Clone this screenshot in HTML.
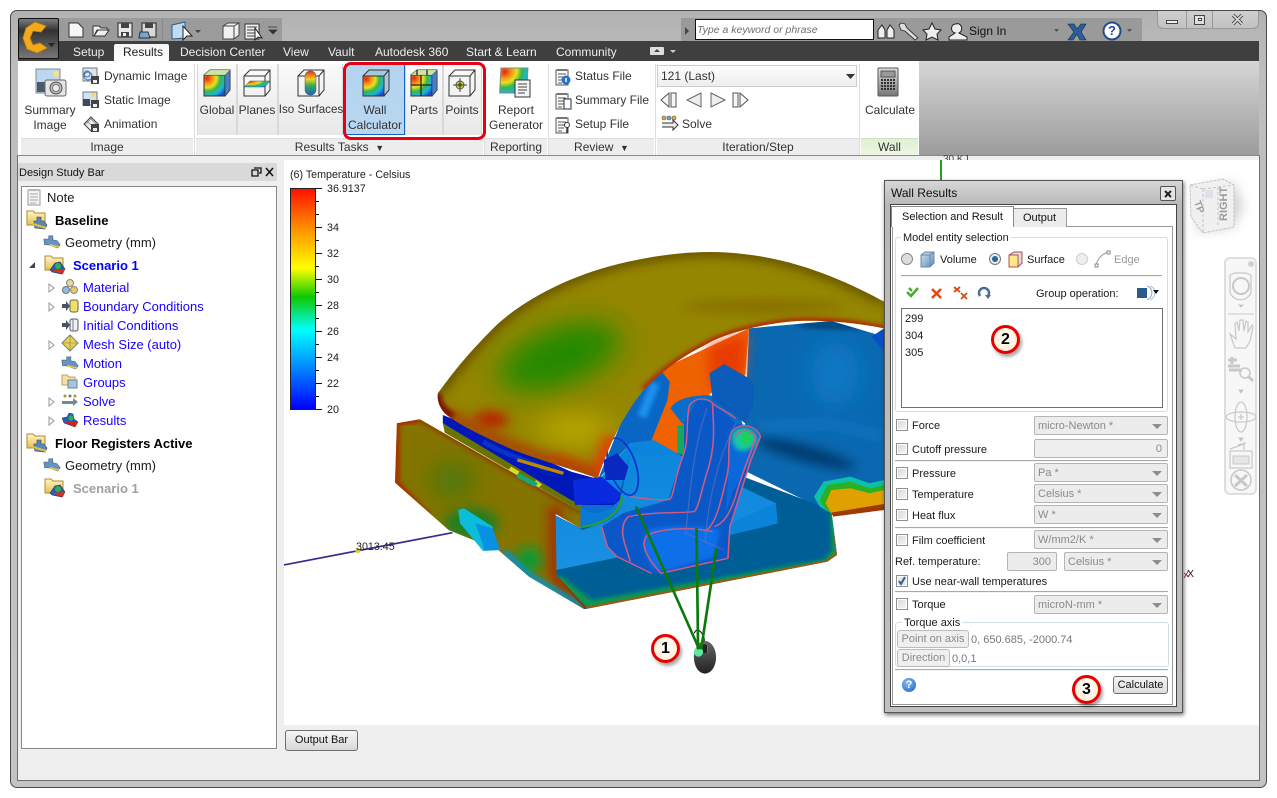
<!DOCTYPE html>
<html><head><meta charset="utf-8"><title>Wall Results</title>
<style>
html,body{margin:0;padding:0;background:#fff}
body{position:relative;width:1277px;height:798px;overflow:hidden;font:12px/14px "Liberation Sans",sans-serif;color:#1a1a1a}
.b{position:absolute;box-sizing:border-box}
.t{position:absolute;white-space:nowrap;line-height:14px;font-size:12px}
.d{font-size:11px;margin-top:1px}
.c{text-align:center;transform:translateX(-50%)}
.bl{color:#1a00ff;font-size:13px;margin-top:1px}
.bd{font-weight:bold;font-size:13px;color:#000;margin-top:1px}
.i{position:absolute;overflow:visible}
.sel{position:absolute;box-sizing:border-box;height:19px;background:#ececec;border:1px solid #b4b4b4;border-radius:2px;color:#8a8a8a;padding:2px 0 0 3px;font-size:11px;white-space:nowrap}
.arr:after{content:"";position:absolute;right:5px;top:7px;border:5px solid transparent;border-top:5px solid #8d8d8d;border-bottom:0}
.cb{position:absolute;left:896px;width:12px;height:12px;box-sizing:border-box;border:1px solid #8e8f8f;background:linear-gradient(135deg,#d8d8d8,#f6f6f6);box-shadow:inset 0 0 0 1px #fff}
.hr{position:absolute;left:895px;width:273px;height:1px;background:#a8a8a8;box-shadow:0 1px 0 #f4f4f4}
.btn{position:absolute;box-sizing:border-box;background:linear-gradient(#f4f4f4,#dedede);border:1px solid #707070;border-radius:3px;text-align:center;font-size:11px;line-height:16px}
.dis{border-color:#bbb;color:#8a8a8a;background:#efefef}
.grp{position:absolute;top:138px;height:17px;background:#ededed;text-align:center;color:#333;font-size:12px;line-height:16px;border-top:1px solid #ddd;box-sizing:border-box}
.tile{position:absolute;top:64px;height:71px;box-sizing:border-box;background:linear-gradient(#fafafa,#e8e8e8);border:1px solid #d8d8d8;border-width:0 1px}
.num{position:absolute;box-sizing:border-box;width:29px;height:29px;border:3px solid #e80000;border-radius:50%;background:radial-gradient(circle at 50% 40%,#fff,#ffeccb);font:bold 16px/23px "Liberation Sans",sans-serif;color:#000;text-align:center;box-shadow:2px 3px 3px rgba(0,0,0,.35)}
.lg{left:327px;font-size:10.7px;margin-top:1px}
</style></head><body>

<svg width="0" height="0" style="position:absolute">
<defs>
<radialGradient id="ct" cx="15%" cy="15%" r="105%"><stop offset="0" stop-color="#e8201c"/><stop offset=".25" stop-color="#f59a10"/><stop offset=".42" stop-color="#e8e020"/><stop offset=".6" stop-color="#35b84a"/><stop offset=".8" stop-color="#20b4d8"/><stop offset="1" stop-color="#1a50c8"/></radialGradient>
<linearGradient id="gy" x1="0" y1="0" x2="0" y2="1"><stop offset="0" stop-color="#e0e0e0"/><stop offset="1" stop-color="#777"/></linearGradient>
<linearGradient id="bm" x1="0" y1="0" x2="1" y2="1"><stop offset="0" stop-color="#d5e4f2"/><stop offset="1" stop-color="#5c8ab8"/></linearGradient>
<linearGradient id="ye" x1="0" y1="0" x2="0" y2="1"><stop offset="0" stop-color="#fff6c8"/><stop offset="1" stop-color="#e8c050"/></linearGradient>
<linearGradient id="rbr" x1="0" y1="0" x2="0" y2="1"><stop offset="0" stop-color="#e83010"/><stop offset=".35" stop-color="#f0d020"/><stop offset=".6" stop-color="#30b050"/><stop offset="1" stop-color="#2060c8"/></linearGradient>
<symbol id="cube" viewBox="0 0 28 28"><rect x="1" y="6" width="21" height="21" fill="url(#ct)" stroke="#333"/><path d="M1 6 7 1H27V21L22 27M22 6 27 1" fill="none" stroke="#333"/><path d="M22 6 27 1V21L22 27Z" fill="#2060b0" opacity=".8"/><path d="M1 6 7 1H27L22 6Z" fill="#c8e0a0" opacity=".9"/></symbol>
<symbol id="fold" viewBox="0 0 22 22"><path d="M1 3H7L9 5H19V17H1Z" fill="url(#ye)" stroke="#b08a30"/><path d="M8 17V13H11V9H15V13H18L21 17 19 21 9 20Z" fill="#5a86b8" stroke="#345" stroke-width=".6"/><path d="M7 16 20 20" stroke="#e4c040" stroke-width="2"/></symbol>
<symbol id="folc" viewBox="0 0 22 22"><path d="M1 3H7L9 5H19V17H1Z" fill="url(#ye)" stroke="#b08a30"/><path d="M6 17 11 10 16 9 21 16 18 21 8 19Z" fill="#1a60c0" stroke="#333" stroke-width=".6"/><circle cx="14" cy="13" r="3" fill="#30b050"/><path d="M7 17 19 21 21 16" fill="#d83010"/></symbol>
<symbol id="geo" viewBox="0 0 22 18"><path d="M1 6H7V2H12V7L17 8 21 13 18 17 7 13H2Z" fill="#6a92c0" stroke="#4a6a90" stroke-width=".8"/><path d="M8 13 20 16" stroke="#e8c850" stroke-width="2"/></symbol>
<symbol id="tri" viewBox="0 0 7 10"><path d="M1 1 6 5 1 9Z" fill="#fff" stroke="#999"/></symbol>
<symbol id="note" viewBox="0 0 14 18"><rect x="1" y="2" width="12" height="15" fill="#f2f2f2" stroke="#999"/><path d="M3 6H11M3 9H11M3 12H11M3 15H9" stroke="#aaa"/><path d="M1 1H13V3H1Z" fill="#bbb"/></symbol>
<symbol id="doc" viewBox="0 0 16 18"><rect x="1" y="2" width="12" height="15" fill="#fafafa" stroke="#555"/><path d="M3 1V3M5 1V3M7 1V3M9 1V3M11 1V3" stroke="#444"/><path d="M3 6H11M3 9H11M3 12H9M3 15H7" stroke="#555"/></symbol>
</defs></svg>

<!-- window frame -->
<div class="b" style="left:10px;top:10px;width:1257px;height:778px;border:1px solid #4a4a4a;border-radius:7px;background:linear-gradient(#b2b2b2,#bdbdbd 60px,#c4c4c4)"></div>
<div class="b" style="left:17px;top:155px;width:1243px;height:626px;background:#efefef;border:1px solid #6e6e6e;border-top:1px solid #999"></div>
<div class="b" style="left:1157px;top:11px;width:102px;height:18px;background:linear-gradient(#cfcfcf,#c2c2c2);border:1px solid #999;border-top:0;border-radius:0 0 6px 6px"></div>
<div class="b" style="left:1186px;top:11px;width:1px;height:17px;background:#999"></div>
<div class="b" style="left:1212px;top:11px;width:1px;height:17px;background:#999"></div>
<div class="b" style="left:1166px;top:20px;width:12px;height:4px;background:#eee;border:1px solid #444"></div>
<div class="b" style="left:1194px;top:15px;width:11px;height:10px;background:#ddd;border:1px solid #444"></div>
<div class="b" style="left:1198px;top:18px;width:4px;height:3px;border:1px solid #444;background:#fff"></div>
<svg class="i" style="left:1231px;top:14px" width="13" height="11"><path d="M2 1 11 10M11 1 2 10" stroke="#444" stroke-width="3.4"/><path d="M2 1 11 10M11 1 2 10" stroke="#ddd" stroke-width="1.6"/></svg>

<!-- Tab bar -->
<div class="b" style="left:18px;top:41px;width:1241px;height:20px;background:#3f3f3f"></div>
<div class="b" style="left:114px;top:44px;width:55px;height:18px;background:linear-gradient(#f4f4f4,#fff);border-radius:2px 2px 0 0"></div>
<div class="t" style="left:73px;top:45px;color:#eee">Setup</div>
<div class="t" style="left:123px;top:45px;color:#222">Results</div>
<div class="t" style="left:180px;top:45px;color:#eee">Decision Center</div>
<div class="t" style="left:283px;top:45px;color:#eee">View</div>
<div class="t" style="left:328px;top:45px;color:#eee">Vault</div>
<div class="t" style="left:375px;top:45px;color:#eee">Autodesk 360</div>
<div class="t" style="left:466px;top:45px;color:#eee">Start &amp; Learn</div>
<div class="t" style="left:556px;top:45px;color:#eee">Community</div>
<svg class="i" style="left:650px;top:46px" width="28" height="10"><rect x="0" y="1" width="14" height="8" rx="1" fill="#ddd"/><path d="M4 6 7 3 10 6Z" fill="#444"/><path d="M20 4H26L23 7Z" fill="#ccc"/></svg>

<!-- QAT -->
<div class="b" style="left:58px;top:18px;width:224px;height:23px;background:#9b9b9b"></div>
<div class="b" style="left:162px;top:18px;width:1px;height:23px;background:#8a8a8a"></div>
<svg class="i" style="left:58px;top:18px" width="224" height="23">
<path d="M11 5H20L25 10V19H11Z" fill="#f6f6f6" stroke="#333"/>
<path d="M35 8H41L43 10H49V12H39L36 18H35ZM36 18 40 12H51L47 18Z" fill="#f0f0f0" stroke="#333"/>
<path d="M60 5H74V19H60Z" fill="#e8e8e8" stroke="#222"/><path d="M63 5H71V10H63ZM63 14H71V19H63Z" fill="#444"/><rect x="65" y="15" width="3" height="3" fill="#eee"/>
<path d="M84 5H98V19H84Z" fill="#d8d8d8" stroke="#222"/><path d="M87 5H95V10H87Z" fill="#444"/><path d="M82 14H90L92 20H81Z" fill="#7aa6cc" stroke="#234"/>
<path d="M114 7 127 4V20L114 21Z" fill="#bfdcf0" stroke="#2a5a8a"/><path d="M125 8 125 22 129 18 134 18Z" fill="#fff" stroke="#222"/>
<path d="M137 12H143L140 15Z" fill="#444"/>
<path d="M165 8 170 5H181V17L176 21H165Z" fill="#f0f0f0" stroke="#444"/><path d="M165 8H176V21M176 8 181 5" fill="none" stroke="#444"/>
<path d="M171 12H177L174 15Z" fill="#444" transform="translate(-3,0)" opacity="0"/>
</svg>
<svg class="i" style="left:244px;top:22px" width="22" height="18"><rect x="1" y="2" width="14" height="15" fill="#f0f0f0" stroke="#333"/><path d="M3 5H13M3 8H13M3 11H13M3 14H13" stroke="#444"/><path d="M11 6V18L14 15 18 16Z" fill="#fff" stroke="#222"/></svg>
<svg class="i" style="left:267px;top:26px" width="12" height="10"><path d="M1 1H10M2 4H10L6 8Z" fill="#333" stroke="#333" stroke-width=".7"/></svg>
<!-- App button -->
<div class="b" style="left:18px;top:18px;width:41px;height:41px;border:1px solid #111;background:linear-gradient(#7a7a7a,#333 30%,#777 100%);border-radius:2px"></div>
<svg class="i" style="left:18px;top:18px" width="41" height="41"><path d="M28 8 17 4 8 10 5 20 9 31 19 35 29 30 22 25 15 27 12 20 15 13 23 14Z" fill="#f2a91c" stroke="#c48210" stroke-width=".8"/><path d="M30 25 37 25 33.500 29Z" fill="#222"/></svg>

<!-- Search bar -->
<div class="b" style="left:681px;top:18px;width:461px;height:23px;background:#9a9a9a"></div>
<div class="b" style="left:695px;top:19px;width:179px;height:21px;background:#fff;border:1px solid #111"></div>
<div class="t" style="left:697px;top:23px;font-style:italic;color:#6e6e6e;font-size:10.5px">Type a keyword or phrase</div>
<svg class="i" style="left:683px;top:22px" width="460" height="18">
<path d="M2 5 6 9 2 13Z" fill="#444"/>
<path d="M195 8 199 3 202 8V16H195ZM204 8 207 3 211 8V16H204Z" fill="#eee" stroke="#222"/>
<path d="M218 1 222 2 224 6 235 16 232 18 222 9 218 8 216 3Z" fill="#ddd" stroke="#333" stroke-width=".9"/>
<path d="M249 1 252 7 258 8 254 12 255 18 249 15 243 18 244 12 240 8 246 7Z" fill="#eee" stroke="#222"/>
<path d="M273 2A3.500 4 0 0 1 276 11L284 15V18H266V15L272 11A3.500 4 0 0 1 273 2Z" fill="#eee" stroke="#222"/>
<path d="M371 7H376L373.500 10Z" fill="#555"/>
<path d="M385 2H391L394 7 398 2H403L398 10 403 18H397L394 12 390 18H385L391 10Z" fill="#2b5ea0" stroke="#123" stroke-width=".6"/>
<circle cx="429" cy="9" r="8.500" fill="#fff" stroke="#224a90" stroke-width="2"/>
<path d="M444 7H449L446.500 10Z" fill="#555"/>
</svg>
<div class="t" style="left:1108px;top:24px;font-weight:bold;color:#1d4aa0;font-size:13px">?</div>
<div class="t" style="left:969px;top:24px;color:#111">Sign In</div>

<!-- Ribbon -->
<div class="b" style="left:18px;top:61px;width:901px;height:94px;background:#fff"></div>
<div class="b" style="left:919px;top:61px;width:340px;height:94px;background:linear-gradient(#d6d6d6,#9c9c9c)"></div>
<div class="b" style="left:18px;top:155px;width:1241px;height:1px;background:#8a8a8a"></div>
<div class="grp" style="left:21px;width:172px">Image</div>
<div class="grp" style="left:196px;width:287px">Results Tasks &nbsp;<span style="font-size:9px">▼</span></div>
<div class="grp" style="left:485px;width:62px">Reporting</div>
<div class="grp" style="left:549px;width:105px">Review &nbsp;<span style="font-size:9px">▼</span></div>
<div class="grp" style="left:657px;width:202px">Iteration/Step</div>
<div class="grp" style="left:861px;width:57px;background:linear-gradient(#dff0d0,#eef6e4);border-color:#cde0bd">Wall</div>
<div class="b" style="left:194px;top:64px;width:1px;height:91px;background:#ddd"></div>
<div class="b" style="left:484px;top:64px;width:1px;height:91px;background:#ddd"></div>
<div class="b" style="left:548px;top:64px;width:1px;height:91px;background:#ddd"></div>
<div class="b" style="left:655px;top:64px;width:1px;height:91px;background:#ddd"></div>
<div class="b" style="left:859px;top:64px;width:1px;height:91px;background:#ddd"></div>

<!-- Image group -->
<svg class="i" style="left:36px;top:68px" width="30" height="32"><rect x="0" y="1" width="24" height="24" fill="#bcd8f0" stroke="#888"/><rect x="1" y="14" width="10" height="10" fill="#4a5a6a"/><circle cx="20" cy="6" r="3" fill="#ffe080"/><rect x="9" y="12" width="21" height="16" rx="2" fill="#e4e4e4" stroke="#666"/><circle cx="20" cy="20" r="6" fill="#bbb" stroke="#555"/><circle cx="20" cy="20" r="3.500" fill="#eee" stroke="#777"/></svg>
<div class="t c" style="left:50px;top:103px;color:#333">Summary</div>
<div class="t c" style="left:50px;top:118px;color:#333">Image</div>
<svg class="i" style="left:83px;top:68px" width="16" height="16"><rect x="0" y="0" width="14" height="13" fill="#d9e6f2" stroke="#777"/><circle cx="4" cy="6" r="3" fill="none" stroke="#4070b0"/><circle cx="5" cy="8" r="4" fill="none" stroke="#4070b0"/><rect x="8" y="8" width="8" height="8" fill="#444"/><rect x="10" y="12" width="4" height="3" fill="#eee"/></svg>
<svg class="i" style="left:83px;top:92px" width="16" height="16"><rect x="0" y="0" width="14" height="13" fill="#cfe3f5" stroke="#777"/><rect x="0" y="7" width="7" height="7" fill="#3a4a5a"/><circle cx="10" cy="3" r="2" fill="#ffd860"/><rect x="8" y="8" width="8" height="8" fill="#444"/><rect x="10" y="12" width="4" height="3" fill="#eee"/></svg>
<svg class="i" style="left:83px;top:116px" width="16" height="16"><path d="M1 8 8 1 15 8 8 15Z" fill="#eee" stroke="#444"/><path d="M4 5 11 12M7 2 14 9M2 9 9 2" stroke="#777" stroke-width=".7"/><rect x="8" y="8" width="8" height="8" fill="#444"/><rect x="10" y="12" width="4" height="3" fill="#eee"/></svg>
<div class="t" style="left:104px;top:69px;color:#333">Dynamic Image</div>
<div class="t" style="left:104px;top:93px;color:#333">Static Image</div>
<div class="t" style="left:104px;top:117px;color:#333">Animation</div>

<!-- Tiles -->
<div class="tile" style="left:197px;width:40px"></div>
<div class="tile" style="left:237px;width:41px"></div>
<div class="tile" style="left:278px;width:65px"></div>
<div class="tile" style="left:345px;width:60px;background:linear-gradient(#b4d4ef,#b8d6f0);border:1px solid #1560c4"></div>
<div class="tile" style="left:405px;width:38px"></div>
<div class="tile" style="left:443px;width:39px"></div>
<svg class="i" style="left:203px;top:69px" width="28" height="28"><use href="#cube" width="28" height="28"/></svg>
<svg class="i" style="left:243px;top:69px" width="28" height="28"><path d="M1 7H22V27H1ZM1 7 7 1H27V21L22 27M22 7 27 1" fill="none" stroke="#333"/><path d="M1 18 7 12H27L22 18Z" fill="url(#ct)" stroke="#555" stroke-width=".5"/></svg>
<svg class="i" style="left:297px;top:69px" width="28" height="28"><path d="M1 7H22V27H1ZM1 7 7 1H27V21L22 27M22 7 27 1" fill="none" stroke="#333"/><rect x="8" y="2" width="11" height="24" rx="5" fill="url(#rbr)" stroke="#555" stroke-width=".5"/></svg>
<svg class="i" style="left:362px;top:69px" width="28" height="28"><path d="M1 7 7 1H27V21L22 27" fill="#a8c8e0" stroke="#333"/><path d="M22 7 27 1M1 7H22" stroke="#333"/><rect x="1" y="7" width="21" height="20" fill="url(#ct)" stroke="#333"/></svg>
<svg class="i" style="left:410px;top:69px" width="28" height="28"><use href="#cube" width="28" height="28"/><path d="M1 16H22M11 6V27M7 1V6M17 1V6" stroke="#222" stroke-width="1.3"/></svg>
<svg class="i" style="left:448px;top:69px" width="28" height="28"><path d="M1 7H22V27H1ZM1 7 7 1H27V21L22 27M22 7 27 1" fill="none" stroke="#333"/><circle cx="12" cy="16" r="4" fill="#e8d020" stroke="#555"/><circle cx="12" cy="16" r="2" fill="#209060"/><path d="M12 9V23M5 16H19" stroke="#444"/></svg>
<div class="t c" style="left:217px;top:103px;color:#333">Global</div>
<div class="t c" style="left:257px;top:103px;color:#333">Planes</div>
<div class="t c" style="left:311px;top:103px;color:#333;font-size:11.6px">Iso Surfaces</div>
<div class="t c" style="left:375px;top:103px;color:#333">Wall</div>
<div class="t c" style="left:375px;top:118px;color:#333">Calculator</div>
<div class="t c" style="left:424px;top:103px;color:#333">Parts</div>
<div class="t c" style="left:462px;top:103px;color:#333">Points</div>
<div class="b" style="left:343px;top:62px;width:143px;height:78px;border:3px solid #e60012;border-radius:8px"></div>

<!-- Reporting -->
<svg class="i" style="left:500px;top:67px" width="32" height="32"><rect x="1" y="1" width="27" height="25" fill="url(#ct)" stroke="#888" transform="skewX(-3)"/><rect x="15" y="13" width="15" height="17" fill="#f4f4f4" stroke="#333"/><path d="M18 17H27M18 20H27M18 23H27M18 26H25" stroke="#444"/></svg>
<div class="t c" style="left:516px;top:103px;color:#333">Report</div>
<div class="t c" style="left:516px;top:118px;color:#333">Generator</div>

<!-- Review -->
<svg class="i" style="left:555px;top:68px" width="16" height="18"><use href="#doc" width="16" height="18"/><circle cx="11" cy="12" r="4.500" fill="#2870c8"/><path d="M11 10V14" stroke="#fff" stroke-width="1.500"/></svg>
<svg class="i" style="left:555px;top:92px" width="16" height="18"><use href="#doc" width="16" height="18"/><rect x="9" y="7" width="7" height="10" fill="#fff" stroke="#234"/></svg>
<svg class="i" style="left:555px;top:116px" width="16" height="18"><use href="#doc" width="16" height="18"/><circle cx="12" cy="9" r="2.500" fill="#fff" stroke="#333"/><path d="M12 11V17" stroke="#333" stroke-width="1.500"/></svg>
<div class="t" style="left:575px;top:69px;color:#333">Status File</div>
<div class="t" style="left:575px;top:93px;color:#333">Summary File</div>
<div class="t" style="left:575px;top:117px;color:#333">Setup File</div>

<!-- Iteration -->
<div class="b" style="left:657px;top:65px;width:200px;height:22px;background:linear-gradient(#fdfdfd,#eee);border:1px solid #ccc;padding:3px 0 0 3px;color:#333">121 (Last)</div>
<svg class="i" style="left:660px;top:90px" width="90" height="20">
<path d="M9 3 1 10 9 17ZM11 3H16V17H11Z" fill="#f6f6f6" stroke="#555"/>
<path d="M41 3 27 10 41 17Z" fill="#eee" stroke="#666"/>
<path d="M51 3 65 10 51 17Z" fill="#eee" stroke="#666"/>
<path d="M73 3H78V17H73ZM80 3 88 10 80 17Z" fill="#f6f6f6" stroke="#555"/>
</svg>
<svg class="i" style="left:846px;top:74px" width="10" height="6"><path d="M0 0H9L4.500 5Z" fill="#333"/></svg>
<svg class="i" style="left:661px;top:115px" width="18" height="17"><circle cx="3" cy="3" r="2" fill="#e8b040" stroke="#444" stroke-width=".6"/><circle cx="8" cy="3" r="2" fill="#70a8e0" stroke="#444" stroke-width=".6"/><circle cx="13" cy="3" r="2" fill="#e8b040" stroke="#444" stroke-width=".6"/><path d="M1 8H12V5L17 10 12 15V12H1" fill="#eee" stroke="#333"/></svg>
<div class="t" style="left:682px;top:117px;color:#333">Solve</div>

<!-- Calculate -->
<svg class="i" style="left:877px;top:67px" width="22" height="30"><rect x="1" y="1" width="20" height="28" rx="1" fill="url(#gy)" stroke="#555"/><rect x="4" y="4" width="14" height="6" fill="#999" stroke="#555"/><path d="M4 13H18M4 16H18M4 19H18M4 22H18" stroke="#333" stroke-width="2" stroke-dasharray="2 1"/></svg>
<div class="t c" style="left:890px;top:103px;color:#333">Calculate</div>

<!-- Design study bar -->
<div class="b" style="left:18px;top:163px;width:259px;height:18px;background:#d9d9d9"></div>
<div class="t d" style="left:19px;top:165px;color:#111">Design Study Bar</div>
<svg class="i" style="left:251px;top:167px" width="24" height="11"><path d="M3 1H10V6H8M1 3H7V9H1Z" fill="none" stroke="#111" stroke-width="1.300"/><path d="M15 1 22 9M22 1 15 9" stroke="#111" stroke-width="1.500"/></svg>
<div class="b" style="left:21px;top:186px;width:256px;height:563px;background:#fff;border:1px solid #808890"></div>

<svg class="i" style="left:27px;top:188px" width="14" height="18"><use href="#note" width="14" height="18"/></svg>
<div class="t" style="left:47px;top:191px;font-size:13px">Note</div>
<svg class="i" style="left:26px;top:208px" width="22" height="22"><use href="#fold" width="22" height="22"/></svg>
<div class="t bd" style="left:55px;top:213px">Baseline</div>
<svg class="i" style="left:43px;top:234px" width="18" height="15"><use href="#geo" width="18" height="15"/></svg>
<div class="t" style="left:65px;top:236px;font-size:13px">Geometry (mm)</div>
<svg class="i" style="left:29px;top:262px" width="7" height="7"><path d="M6 0V6H0Z" fill="#444"/></svg>
<svg class="i" style="left:44px;top:253px" width="22" height="22"><use href="#folc" width="22" height="22"/></svg>
<div class="t bd" style="left:73px;top:258px;color:#0000ff">Scenario 1</div>

<svg class="i" style="left:48px;top:283px" width="7" height="10"><use href="#tri" width="7" height="10"/></svg>
<svg class="i" style="left:62px;top:279px" width="17" height="16"><circle cx="8" cy="4" r="3.500" fill="#e8d890" stroke="#888"/><circle cx="4" cy="11" r="3.500" fill="#9ab8d8" stroke="#678"/><circle cx="12" cy="11" r="3.500" fill="#e8c860" stroke="#888"/></svg>
<div class="t bl" style="left:83px;top:280px">Material</div>
<svg class="i" style="left:48px;top:302px" width="7" height="10"><use href="#tri" width="7" height="10"/></svg>
<svg class="i" style="left:62px;top:298px" width="17" height="16"><path d="M0 6H4V3L8 8 4 13V10H0Z" fill="#456"/><rect x="8" y="2" width="8" height="12" rx="2" fill="#f0e060" stroke="#665"/></svg>
<div class="t bl" style="left:83px;top:299px">Boundary Conditions</div>
<svg class="i" style="left:62px;top:317px" width="17" height="16"><path d="M0 6H4V3L8 8 4 13V10H0Z" fill="#456"/><rect x="8" y="2" width="8" height="12" rx="2" fill="#f0f0f0" stroke="#556"/><path d="M11 2V14" stroke="#778"/></svg>
<div class="t bl" style="left:83px;top:318px">Initial Conditions</div>
<svg class="i" style="left:48px;top:340px" width="7" height="10"><use href="#tri" width="7" height="10"/></svg>
<svg class="i" style="left:61px;top:335px" width="18" height="17"><path d="M9 0 17 8 9 16 1 8Z" fill="#e8d050" stroke="#786"/><path d="M1 8H17M9 0V16" stroke="#876" stroke-width=".6"/></svg>
<div class="t bl" style="left:83px;top:337px">Mesh Size (auto)</div>
<svg class="i" style="left:61px;top:355px" width="18" height="15"><use href="#geo" width="18" height="15"/></svg>
<div class="t bl" style="left:83px;top:356px">Motion</div>
<svg class="i" style="left:61px;top:373px" width="18" height="16"><path d="M1 2H6L8 4H14V12H1Z" fill="#f2dfa8" stroke="#c0a060"/><rect x="7" y="7" width="9" height="8" fill="#a8c4e0" stroke="#688"/></svg>
<div class="t bl" style="left:83px;top:375px">Groups</div>
<svg class="i" style="left:48px;top:397px" width="7" height="10"><use href="#tri" width="7" height="10"/></svg>
<svg class="i" style="left:62px;top:394px" width="17" height="14"><circle cx="3" cy="2" r="1.500" fill="#b09030"/><circle cx="8" cy="2" r="1.500" fill="#678"/><circle cx="13" cy="2" r="1.500" fill="#b09030"/><path d="M0 7H11V4L16 8 11 12V10H0Z" fill="#789"/></svg>
<div class="t bl" style="left:83px;top:394px">Solve</div>
<svg class="i" style="left:48px;top:416px" width="7" height="10"><use href="#tri" width="7" height="10"/></svg>
<svg class="i" style="left:61px;top:412px" width="18" height="16"><path d="M1 6 6 5 8 1 12 2 13 7 17 10 14 15 3 11Z" fill="#1a60c0" stroke="#333" stroke-width=".5"/><path d="M3 10 14 15 17 10" fill="#d02020"/><circle cx="10" cy="6" r="2.500" fill="#30b050"/></svg>
<div class="t bl" style="left:83px;top:413px">Results</div>
<svg class="i" style="left:26px;top:431px" width="22" height="22"><use href="#fold" width="22" height="22"/></svg>
<div class="t bd" style="left:55px;top:436px">Floor Registers Active</div>
<svg class="i" style="left:43px;top:457px" width="18" height="15"><use href="#geo" width="18" height="15"/></svg>
<div class="t" style="left:65px;top:459px;font-size:13px">Geometry (mm)</div>
<svg class="i" style="left:44px;top:476px" width="22" height="22"><use href="#folc" width="22" height="22"/></svg>
<div class="t bd" style="left:73px;top:481px;color:#a0a0a0">Scenario 1</div>

<!-- Viewport -->
<div class="b" style="left:284px;top:160px;width:975px;height:565px;background:#fff"></div>
<div class="t" style="left:290px;top:168px;font-size:10.7px;color:#222">(6) Temperature - Celsius</div>
<div class="b" style="left:290px;top:188px;width:26px;height:222px;background:linear-gradient(#ff1000,#ff8a00 17%,#ffff00 36%,#10c800 49%,#00ffff 64%,#0090ff 80%,#0000ff);border:1px solid #222"></div>
<svg class="i" style="left:316px;top:188px" width="8" height="223"><path d="M0 .5H6M0 13.500H3M0 26.500H3M0 39.500H6M0 52.500H3M0 65.500H6M0 78.500H3M0 91.500H6M0 104.500H3M0 117.500H6M0 130.500H3M0 143.500H6M0 156.500H3M0 169.500H6M0 182.500H3M0 195.500H6M0 208.500H3M0 221.500H6" stroke="#111" fill="none"/></svg>
<div class="t lg" style="top:181px">36.9137</div>
<div class="t lg" style="top:220px">34</div>
<div class="t lg" style="top:246px">32</div>
<div class="t lg" style="top:272px">30</div>
<div class="t lg" style="top:298px">28</div>
<div class="t lg" style="top:324px">26</div>
<div class="t lg" style="top:350px">24</div>
<div class="t lg" style="top:376px">22</div>
<div class="t lg" style="top:402px">20</div>

<!-- Car -->
<svg class="i" style="left:0;top:0" width="1277" height="798">
<defs>
<filter id="b5" x="-50%" y="-50%" width="200%" height="200%"><feGaussianBlur stdDeviation="6"/></filter>
<filter id="b15" x="-50%" y="-50%" width="200%" height="200%"><feGaussianBlur stdDeviation="16"/></filter>
<filter id="b40" x="-100%" y="-100%" width="300%" height="300%"><feGaussianBlur stdDeviation="40"/></filter>
<clipPath id="roof"><path d="M402,700C440,640 480,580 560,490C640,410 760,340 900,305C1000,280 1100,268 1200,282C1350,300 1480,370 1568,425L1568,505C1500,490 1430,480 1340,483C1250,490 1150,520 1100,555C1040,590 990,630 940,690C890,760 850,850 820,955C760,930 680,905 600,870C520,830 450,790 420,760C405,740 400,720 402,700Z"/></clipPath>
<clipPath id="wall"><path d="M295,790 355,778 775,1055 775,1105 710,1062 712,1250 785,1348 640,1250 560,1170 430,1110 290,968Z"/></clipPath>
<clipPath id="body"><path d="M708,1065 775,1105 830,1090 875,1010 905,880 1030,880 1200,950 1430,1050 1445,1185 1420,1205 785,1348 712,1250Z"/></clipPath>
<clipPath id="rr"><path d="M1215,505 1430,483 1568,530V1050L1430,1060 1200,930Z"/></clipPath>
<linearGradient id="fl" x1="0" y1="0" x2="0" y2="1"><stop offset="0" stop-color="#0a86dc"/><stop offset="1" stop-color="#1a90e0"/></linearGradient>
<linearGradient id="ram" x1="0" y1="0" x2="0" y2="1"><stop offset="0" stop-color="#666"/><stop offset="1" stop-color="#222"/></linearGradient>
</defs>
<g transform="translate(284,160) scale(.3827,.3333)">
<path d="M0,1215 440,1118" stroke="#3a2a90" stroke-width="5" fill="none"/>
<circle cx="193" cy="1172" r="7" fill="#d8c830"/>

<!-- rear right blue -->
<g clip-path="url(#rr)"><rect x="1190" y="480" width="400" height="600" fill="#0a68b0"/>
<ellipse cx="1440" cy="640" rx="60" ry="100" fill="#0c7ac8" filter="url(#b40)"/>
<ellipse cx="1360" cy="880" rx="140" ry="24" fill="#043a6e" filter="url(#b15)" transform="rotate(18 1360 880)"/>
<ellipse cx="1460" cy="495" rx="120" ry="14" fill="#054a80" filter="url(#b5)"/>
<path d="M1240,800 1420,790 1568,830" stroke="#0a70bc" stroke-width="40" fill="none" filter="url(#b15)"/></g>
<path d="M1535,530 1568,505V575Z" fill="#0a50c8"/>
<!-- orange back -->
<path d="M950,680 1000,620 1215,505 1205,645 1115,700 1060,790 1060,900 960,840Z" fill="#ef6200"/>
<path d="M1110,560 1210,520 1200,650 1115,690Z" fill="#e83a00" filter="url(#b15)"/>
<path d="M1028,795H1044V885H1028Z" fill="#12a860"/>
<!-- pillar and floor backdrop -->
<path d="M820,960 880,790 940,680 985,632 1008,665 1002,720 960,842 905,850Z" fill="#0a66c4"/>
<path d="M970,670 935,770" stroke="#1f92f0" stroke-width="24" filter="url(#b5)"/>
<path d="M830,950 905,850 965,840 1035,885 1035,1020 875,1020Z" fill="#0a84dc"/>
<path d="M770,1030H885V1100H770Z" fill="#0a6ed0"/>
<!-- body -->
<g clip-path="url(#body)"><rect x="700" y="860" width="760" height="500" fill="#005e97"/>
<path d="M708,1065 780,1110 830,1090 880,1010 905,880 960,840 1030,880 1050,900 1285,1030 1290,1090 1240,1105 712,1230Z" fill="url(#fl)"/>
<path d="M1165,1090 1285,1030 1290,1090 1240,1105 1165,1125Z" fill="#0a84d8"/>
<path d="M712,1255 800,1335 1420,1210 1445,1175 1440,1060" fill="none" stroke="#0a9a50" stroke-width="26" filter="url(#b5)"/>
<path d="M790,1345 1420,1205 1445,1180 1440,1060" fill="none" stroke="#9a5a10" stroke-width="10"/>
<path d="M712,1255 785,1345" stroke="#8a3a00" stroke-width="12"/>
</g>
<!-- rear corner -->
<path d="M1385,1010 1410,965 1480,950 1530,970 1568,960V1040L1430,1060 1400,1040Z" fill="#0dc0a8"/>
<path d="M1400,1020 1420,975 1480,965 1530,985 1568,975V1040L1430,1060 1410,1040Z" fill="#2ab020"/>
<path d="M1415,1030 1430,990 1480,985 1530,1000 1568,990V1040L1430,1060Z" fill="#e0a000"/>
<path d="M1430,1058 1568,1032V1050L1435,1070Z" fill="#a03800"/>
<!-- seat -->
<path d="M1010,745C1030,705 1110,695 1180,720L1200,800 1100,790 1040,790Z" fill="#0a6ec8"/>
<path d="M1112,640 1150,612 1215,655 1228,680 1225,740 1205,790 1120,720Z" fill="#0a5cb8"/>
<path d="M1045,790 1080,720 1120,725 1180,790 1230,800 1245,830 1220,900 1165,1100 1160,1195 980,1240 960,1240 870,1190 845,1160 830,1100 885,1060 1005,1020 1020,960 1045,880Z" fill="#0a58c8"/>
<path d="M950,1110C1000,1090 1120,1100 1140,1110L1125,1190 990,1235 960,1220 935,1150Z" fill="#0f70e8" filter="url(#b5)"/>
<path d="M1165,850C1175,800 1230,790 1245,830L1220,900 1170,1000 1155,1060Z" fill="#0b68d8"/>
<path d="M1170,820C1190,790 1240,800 1235,850 1210,880 1170,890 1170,820Z" fill="#12c8a8" filter="url(#b5)"/>
<ellipse cx="1208" cy="835" rx="14" ry="22" fill="#20d050" filter="url(#b5)"/>
<!-- pink outlines -->
<g fill="none" stroke="#d65a80" stroke-width="4" stroke-linejoin="round">
<path d="M905,1010C950,1018 990,1022 1008,1018 1020,1005 1018,960 1045,880 1058,840 1050,770 1060,735 1075,712 1105,712 1120,730 1140,750 1160,755 1180,775"/>
<path d="M1120,730C1120,780 1130,840 1110,920 1090,990 1085,1040 1072,1055 1040,1060 960,1055 900,1070 885,1085 880,1110 890,1150 L905,1205"/>
<path d="M1120,1115C1060,1100 990,1105 950,1125 930,1150 945,1190 985,1240L1160,1195 1165,1100 1220,900 1245,830C1235,795 1190,785 1170,815 1155,860 1170,900 1155,960 1140,1030 1130,1090 1100,1115"/>
<path d="M1180,830C1190,805 1225,810 1232,830 1225,870 1195,940 1180,1010 1165,1060 1150,1090 1125,1100"/>
<path d="M960,1240 870,1190 845,1160 830,1100"/>
</g>
<g fill="none" stroke="#6a74c0" stroke-width="3" opacity=".6"><path d="M1105,745C1070,860 1060,1000 1050,1120L1150,1170"/><path d="M1180,790C1140,880 1110,1000 1100,1150"/></g>
<!-- wall -->
<g clip-path="url(#wall)"><rect x="280" y="770" width="530" height="600" fill="#857400"/>
<ellipse cx="440" cy="960" rx="45" ry="60" fill="#3a7a10" filter="url(#b40)"/>
<ellipse cx="490" cy="1090" rx="70" ry="45" fill="#1a8020" filter="url(#b15)"/>
<ellipse cx="640" cy="1200" rx="35" ry="40" fill="#0a9a30" filter="url(#b15)"/>
<path d="M700,1040 710,1062 712,1250 785,1348" fill="none" stroke="#a82800" stroke-width="34" filter="url(#b15)"/>
<path d="M295,790 355,778" fill="none" stroke="#aa2a00" stroke-width="20" filter="url(#b5)"/>
<path d="M295,790 295,968 380,1070" fill="none" stroke="#a82a00" stroke-width="14" filter="url(#b5)"/>
<path d="M355,778 775,1055" fill="none" stroke="#8a4000" stroke-width="14" filter="url(#b5)"/>
<path d="M575,1175 640,1245 790,1348" fill="none" stroke="#0a8fb0" stroke-width="20" filter="url(#b5)"/>
</g>
<path d="M455,1050 470,1045 545,1100 550,1140 565,1170 520,1173 460,1090Z" fill="#0bbdd8"/>
<path d="M500,1090 545,1105 565,1170 525,1172Z" fill="#0a90e0"/>
<!-- dash strip -->
<path d="M415,790 780,1035 775,1055 420,818Z" fill="#6a7200"/>
<path d="M590,925 612,940M655,965 670,978" stroke="#d8e020" stroke-width="12"/>
<path d="M610,945 660,975" stroke="#14a878" stroke-width="14"/>
<!-- dash -->
<path d="M415,765 470,790 750,935 830,960 870,990 880,1020 860,1035 780,1035 750,1020 415,790Z" fill="#0018b8"/>
<path d="M520,845 560,870 690,930" stroke="#0a32c8" stroke-width="14" fill="none"/>
<path d="M610,900 730,940" stroke="#c08a00" stroke-width="10"/>
<path d="M755,960 830,950 880,1000 870,1030 760,1035Z" fill="#0a2ae0"/>
<path d="M775,1040C800,1080 870,1050 880,1010 885,1040 880,1090 775,1105Z" fill="#0a7ad8"/>
<path d="M780,1100C830,1095 880,1060 883,1010" fill="none" stroke="#30a020" stroke-width="6"/>
<!-- steering -->
<ellipse cx="885" cy="920" rx="35" ry="88" transform="rotate(-15 885 920)" fill="none" stroke="#0a3ad0" stroke-width="5"/>
<path d="M835,900 870,880 900,920 890,960 840,960Z" fill="#0828c0"/>
<!-- roof -->
<g clip-path="url(#roof)"><rect x="380" y="260" width="1200" height="720" fill="#948600"/>
<ellipse cx="720" cy="590" rx="170" ry="85" transform="rotate(-25 720 590)" fill="#208a00" filter="url(#b40)"/>
<ellipse cx="760" cy="810" rx="100" ry="45" fill="#bcaa00" filter="url(#b40)"/>
<ellipse cx="1250" cy="440" rx="210" ry="20" fill="#887000" filter="url(#b15)"/>
<ellipse cx="540" cy="780" rx="45" ry="28" fill="#b82800" filter="url(#b15)"/>
<path d="M700,900 820,955 860,830" fill="none" stroke="#e04000" stroke-width="46" filter="url(#b15)"/>
<path d="M420,760C520,830 620,880 820,955" fill="none" stroke="#a84a00" stroke-width="46" filter="url(#b15)"/>
<path d="M940,690C990,630 1040,590 1100,555 1150,520 1250,490 1340,483 1430,480 1500,490 1568,505" fill="none" stroke="#b02c00" stroke-width="18" filter="url(#b5)"/>
<path d="M402,700C440,640 480,580 560,490C640,410 760,340 900,305C1000,280 1100,268 1200,282C1350,300 1480,370 1568,425" fill="none" stroke="#4a3000" stroke-width="18" filter="url(#b15)"/>
<path d="M402,700C400,730 415,750 440,770" fill="none" stroke="#7a1000" stroke-width="20" filter="url(#b5)"/>
</g>
<!-- callout lines & mouse -->
<path d="M1072,1420C1080,1395 1100,1425 1098,1445" fill="none" stroke="#111" stroke-width="3"/>
<ellipse cx="1100" cy="1492" rx="29" ry="49" fill="url(#ram)"/>
<rect x="1092" y="1452" width="14" height="30" rx="6" fill="#222" stroke="#aaa"/>
<ellipse cx="1083" cy="1476" rx="12" ry="14" fill="#60e8a0"/>
<g stroke="#0a7a0a" stroke-width="7" fill="none"><path d="M920,1040 1085,1468"/><path d="M1078,1105 1082,1468"/><path d="M1130,1165 1090,1468"/></g>
</g>
<path d="M941 160V182" stroke="#1ca21c" stroke-width="2"/>
<path d="M1184 573 1189 577M1189 570 1184 578" stroke="#c03040" stroke-width="1" fill="none"/>
</svg>
<div class="t" style="left:356px;top:540px;font-size:10.7px;color:#222">3013.45</div>
<div class="t" style="left:943px;top:153px;font-size:10px;color:#444;height:7px;overflow:hidden">30 KJ</div>
<div class="t" style="left:1187px;top:567px;font-size:10.5px;color:#222">X</div>

<!-- ViewCube -->
<svg class="i" style="left:1185px;top:175px" width="68" height="70">
<path d="M14 14 48 8 58 30 48 52 12 56Z" fill="#777" opacity=".35" filter="url(#b5)"/>
<path d="M5 10 38 4 49 10 49 52 18 58 6 42Z" fill="#f0f0f0" stroke="#c4c4c4" stroke-dasharray="3 1"/>
<path d="M18 14 49 10M18 14 5 10M18 14V58M33 12V52" stroke="#c4c4c4" stroke-dasharray="3 2" fill="none"/>
<rect x="20" y="15" width="8" height="8" fill="#dde2ea"/>
<text transform="translate(42,46) rotate(-90)" font-size="11" font-family="Liberation Sans" font-weight="bold" fill="#9c9c9c">RIGHT</text>
<text transform="translate(9,27) rotate(70)" font-size="10" font-family="Liberation Sans" font-weight="bold" fill="#9c9c9c">TP</text>
</svg>

<!-- Navbar -->
<div class="b" style="left:1224px;top:257px;width:33px;height:238px;background:#f7f7f7;border:2px solid #dedede;border-radius:6px"></div>
<svg class="i" style="left:1224px;top:257px" width="33" height="238" fill="none" stroke="#c8c8c8">
<circle cx="27" cy="7" r="3" fill="#d0d0d0" stroke="none"/>
<path d="M6 18 11 16H22L27 18V36C22 45 11 45 6 36Z" stroke-width="1.200"/><circle cx="17" cy="29" r="8" stroke-width="2"/><path d="M17 50 15 48H19Z" fill="#bbb"/>
<path d="M4 57H30"/>
<path d="M6 77 12 82 11 67 13 65 15 74 16 63 19 63 20 74 22 64 24 65 24 75 28 68 29 70 26 84 22 91H11Z" stroke-width="1.200"/>
<path d="M4 109H16M8 100V107M4 103H13M5 113H18" stroke-width="3"/><circle cx="21" cy="116" r="5" stroke-width="1.500"/><path d="M25 120 29 124" stroke-width="3"/>
<path d="M15 133H19L17 136Z" fill="#bbb"/>
<ellipse cx="17" cy="160" rx="6" ry="15" stroke-width="1.200"/><ellipse cx="17" cy="160" rx="15" ry="5" stroke-width="1.200"/><path d="M14 160H20M17 157V163" stroke-width="1.200"/>
<path d="M15 181H19L17 184Z" fill="#bbb"/>
<rect x="6" y="194" width="22" height="17" stroke-width="1.200"/><rect x="9" y="199" width="16" height="8" fill="#e6e6e6"/><path d="M6 192 20 187V193M14 188 22 186" stroke-width="1.200"/>
<circle cx="17" cy="223" r="10" stroke-width="1.500"/><path d="M11 218 23 229M23 218 11 229" stroke-width="3"/>
</svg>

<!-- Output Bar -->
<div class="btn" style="left:285px;top:730px;width:73px;height:21px;line-height:19px;border-radius:3px;color:#111;background:linear-gradient(#f6f6f6,#d8d8d8)">Output Bar</div>

<!-- Dialog -->
<div class="b" style="left:884px;top:180px;width:299px;height:533px;background:linear-gradient(#d6d6d6,#b8b8b8 24px,#c0c0c0);border:1px solid #555;box-shadow:1px 2px 4px rgba(0,0,0,.55)"></div>
<div class="t" style="left:891px;top:186px;color:#111">Wall Results</div>
<div class="b" style="left:1160px;top:186px;width:16px;height:15px;border:1px solid #555;border-radius:2px;background:#e4e4e4"></div>
<svg class="i" style="left:1164px;top:190px" width="8" height="8"><path d="M1 1 7 7M7 1 1 7" stroke="#222" stroke-width="2"/></svg>
<div class="b" style="left:890px;top:204px;width:287px;height:503px;background:#fff;border:1px solid #444"></div>
<div class="b" style="left:892px;top:226px;width:281px;height:479px;background:#fff;border:1px solid #999"></div>
<div class="b" style="left:1013px;top:208px;width:54px;height:19px;background:#ececec;border:1px solid #999;border-bottom:0"></div>
<div class="b" style="left:891px;top:206px;width:123px;height:21px;background:#fff;border:1px solid #888;border-bottom:0"></div>
<div class="t d" style="left:902px;top:209px;color:#111">Selection and Result</div>
<div class="t d" style="left:1023px;top:210px;color:#111">Output</div>

<div class="b" style="left:895px;top:237px;width:273px;height:175px;border:1px solid #cfdde4;border-radius:3px"></div>
<div class="t d" style="left:901px;top:230px;background:#fff;padding:0 2px">Model entity selection</div>
<svg class="i" style="left:900px;top:250px" width="240" height="18">
<circle cx="7" cy="9" r="5.500" fill="#ddd" stroke="#888"/>
<path d="M21 5 25 2H34V13L30 17H21Z" fill="url(#bm)" stroke="#6a8aaa"/><path d="M21 5H30V17M30 5 34 2" stroke="#6a8aaa" fill="none"/>
<circle cx="95" cy="9" r="5.500" fill="#eee" stroke="#777"/><circle cx="95" cy="9" r="3" fill="#1a6a9a"/>
<path d="M109 5 114 2H122V13L118 17H109Z" fill="#ddd" stroke="#a05050"/><rect x="109" y="5" width="9" height="12" fill="#ffe88a" stroke="#b05050"/>
<circle cx="182" cy="9" r="5.500" fill="#eee" stroke="#ccc"/>
<path d="M196 15C198 8 202 4 208 2" stroke="#999" fill="none"/><rect x="195" y="14" width="3" height="3" fill="#fff" stroke="#888"/><rect x="207" y="1" width="3" height="3" fill="#fff" stroke="#888"/>
</svg>
<div class="t d" style="left:940px;top:252px">Volume</div>
<div class="t d" style="left:1027px;top:252px">Surface</div>
<div class="t d" style="left:1114px;top:252px;color:#999">Edge</div>
<div class="hr" style="left:901px;width:261px;top:275px"></div>

<svg class="i" style="left:905px;top:285px" width="260" height="16">
<path d="M2 7 6 11 13 3M4 3 7 6" fill="none" stroke="#4eaa2c" stroke-width="2.500"/>
<path d="M27 4 36 13M36 4 27 13" stroke="#d84a18" stroke-width="2.500"/>
<path d="M49 2 55 7M55 2 49 7" stroke="#d84a18" stroke-width="1.800"/><path d="M56 8 62 14M62 8 56 14" stroke="#d84a18" stroke-width="1.800"/>
<path d="M75 11A5 5 0 1 1 83 11" fill="none" stroke="#4a6e94" stroke-width="2.500"/><path d="M80 10H86L83 14Z" fill="#4a6e94"/>
<rect x="232" y="3" width="10" height="10" fill="#2a5a90"/><path d="M242 1C248 3 249 11 242 15" stroke="#88aacc" fill="none"/><path d="M245 1C251 3 252 11 245 15" stroke="#aac0dc" fill="none"/><path d="M248 5H254L251 9Z" fill="#111"/>
</svg>
<div class="t d" style="left:1036px;top:286px">Group operation:</div>
<div class="b" style="left:901px;top:308px;width:262px;height:100px;border:1px solid #707070;background:#fff"></div>
<div class="t d" style="left:905px;top:311px">299</div>
<div class="t d" style="left:905px;top:328px">304</div>
<div class="t d" style="left:905px;top:345px">305</div>

<div class="cb" style="top:419px"></div><div class="t d" style="left:912px;top:418px">Force</div>
<div class="sel arr" style="left:1034px;top:416px;width:134px">micro-Newton *</div>
<div class="cb" style="top:443px"></div><div class="t d" style="left:912px;top:442px">Cutoff pressure</div>
<div class="sel" style="left:1034px;top:439px;width:134px;text-align:right;padding-right:5px;background:#eee">0</div>
<div class="hr" style="top:460px"></div>
<div class="cb" style="top:467px"></div><div class="t d" style="left:912px;top:466px">Pressure</div>
<div class="sel arr" style="left:1034px;top:463px;width:134px">Pa *</div>
<div class="cb" style="top:488px"></div><div class="t d" style="left:912px;top:487px">Temperature</div>
<div class="sel arr" style="left:1034px;top:484px;width:134px">Celsius *</div>
<div class="cb" style="top:509px"></div><div class="t d" style="left:912px;top:508px">Heat flux</div>
<div class="sel arr" style="left:1034px;top:505px;width:134px">W *</div>
<div class="hr" style="top:527px"></div>
<div class="cb" style="top:534px"></div><div class="t d" style="left:912px;top:533px">Film coefficient</div>
<div class="sel arr" style="left:1034px;top:530px;width:134px">W/mm2/K *</div>
<div class="t d" style="left:895px;top:554px">Ref. temperature:</div>
<div class="sel" style="left:1007px;top:552px;width:50px;text-align:right;padding-right:5px">300</div>
<div class="sel arr" style="left:1064px;top:552px;width:104px">Celsius *</div>
<div class="cb" style="top:575px;background:#e4e8ee"></div>
<svg class="i" style="left:897px;top:576px" width="10" height="10"><path d="M2 5 4 8 8 1" fill="none" stroke="#3a5a90" stroke-width="2"/></svg>
<div class="t d" style="left:912px;top:574px">Use near-wall temperatures</div>
<div class="hr" style="top:591px"></div>
<div class="cb" style="top:598px"></div><div class="t d" style="left:912px;top:597px">Torque</div>
<div class="sel arr" style="left:1034px;top:595px;width:134px">microN-mm *</div>
<div class="b" style="left:895px;top:622px;width:274px;height:45px;border:1px solid #cfdde4;border-radius:3px"></div>
<div class="t d" style="left:902px;top:615px;background:#fff;padding:0 2px">Torque axis</div>
<div class="btn dis" style="left:897px;top:630px;width:72px;height:18px">Point on axis</div>
<div class="t d" style="left:971px;top:632px;color:#777">0, 650.685, -2000.74</div>
<div class="btn dis" style="left:897px;top:649px;width:53px;height:18px">Direction</div>
<div class="t d" style="left:952px;top:651px;color:#777">0,0,1</div>
<div class="hr" style="top:669px"></div>
<div class="b" style="left:902px;top:678px;width:14px;height:14px;border-radius:50%;background:radial-gradient(circle at 40% 35%,#8ac0f4,#1a58c0);color:#fff;font:bold 11px/14px 'Liberation Sans',sans-serif;text-align:center">?</div>
<div class="btn" style="left:1113px;top:676px;width:55px;height:18px;color:#111">Calculate</div>

<!-- Numbers -->
<div class="num" style="left:651px;top:634px">1</div>
<div class="num" style="left:991px;top:325px">2</div>
<div class="num" style="left:1072px;top:675px">3</div>
</body></html>
